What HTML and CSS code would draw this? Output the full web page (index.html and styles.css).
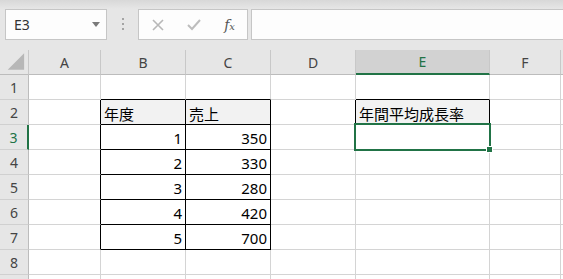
FILE: index.html
```html
<!DOCTYPE html>
<html lang="ja">
<head>
    <meta charset="UTF-8">
    <meta name="viewport" content="width=device-width, initial-scale=1.0">
    <title>年間平均成長率</title>
    <link rel="stylesheet" href="styles.css">
</head>
<body>

<div class="toolbar">
    <div class="name-box">
        <span>E3</span>
        <svg class="arrow" width="8" height="5" viewBox="0 0 8 5"><polygon points="0,0 8,0 4,5" fill="#7a7a7a"/></svg>
    </div>
    <div class="grip"><i></i><i></i><i></i></div>
    <div class="fx-box">
        <svg width="12" height="12" viewBox="0 0 12 12"><path d="M1 1 L11 11 M11 1 L1 11" stroke="#b8b8b8" stroke-width="1.6" fill="none"/></svg>
        <svg width="14" height="12" viewBox="0 0 14 12"><path d="M1 6 L5 10 L13 1" stroke="#bdbdbd" stroke-width="2" fill="none"/></svg>
        <span class="fx">f<sub>x</sub></span>
    </div>
    <div class="formula"></div>
</div>

<div class="sheet">
    <div class="corner"><svg width="29" height="25" viewBox="0 0 29 25"><polygon points="25,3 25,20 8,20" fill="#b7b7b7"/></svg></div>
    <div class="col-head">A</div>
    <div class="col-head">B</div>
    <div class="col-head">C</div>
    <div class="col-head">D</div>
    <div class="col-head active">E</div>
    <div class="col-head">F</div>
    <div class="col-head"></div>

    <div class="row-head">1</div>
    <div class="cell"></div>
    <div class="cell bb"></div>
    <div class="cell bb"></div>
    <div class="cell"></div>
    <div class="cell bb"></div>
    <div class="cell"></div>
    <div class="cell"></div>

    <div class="row-head">2</div>
    <div class="cell br"></div>
    <div class="cell box fill">年度</div>
    <div class="cell box fill">売上</div>
    <div class="cell br"></div>
    <div class="cell box fill">年間平均成長率</div>
    <div class="cell"></div>
    <div class="cell"></div>

    <div class="row-head active">3</div>
    <div class="cell br"></div>
    <div class="cell box num">1</div>
    <div class="cell box num">350</div>
    <div class="cell"></div>
    <div class="cell selected"><div class="selection"><div class="handle"></div></div></div>
    <div class="cell"></div>
    <div class="cell"></div>

    <div class="row-head">4</div>
    <div class="cell br"></div>
    <div class="cell box num">2</div>
    <div class="cell box num">330</div>
    <div class="cell"></div>
    <div class="cell"></div>
    <div class="cell"></div>
    <div class="cell"></div>

    <div class="row-head">5</div>
    <div class="cell br"></div>
    <div class="cell box num">3</div>
    <div class="cell box num">280</div>
    <div class="cell"></div>
    <div class="cell"></div>
    <div class="cell"></div>
    <div class="cell"></div>

    <div class="row-head">6</div>
    <div class="cell br"></div>
    <div class="cell box num">4</div>
    <div class="cell box num">420</div>
    <div class="cell"></div>
    <div class="cell"></div>
    <div class="cell"></div>
    <div class="cell"></div>

    <div class="row-head">7</div>
    <div class="cell br"></div>
    <div class="cell box num">5</div>
    <div class="cell box num">700</div>
    <div class="cell"></div>
    <div class="cell"></div>
    <div class="cell"></div>
    <div class="cell"></div>

    <div class="row-head">8</div>
    <div class="cell"></div>
    <div class="cell"></div>
    <div class="cell"></div>
    <div class="cell"></div>
    <div class="cell"></div>
    <div class="cell"></div>
    <div class="cell"></div>

    <div class="row-head"></div>
    <div class="cell"></div>
    <div class="cell"></div>
    <div class="cell"></div>
    <div class="cell"></div>
    <div class="cell"></div>
    <div class="cell"></div>
    <div class="cell"></div>
</div>

</body>
</html>
```

FILE: styles.css
```css
body {
    margin: 0;
    padding: 0;
    width: 563px;
    height: 279px;
    overflow: hidden;
    background: #fff;
    font-family: "Noto Sans", "Noto Sans CJK JP", sans-serif;
}

.toolbar {
    display: flex;
    align-items: flex-start;
    height: 50px;
    box-sizing: border-box;
    padding-top: 9px;
    background: linear-gradient(#d8d8d8, #e6e6e6 9px);
}

.name-box {
    display: flex;
    align-items: center;
    justify-content: space-between;
    width: 102px;
    height: 31px;
    margin-left: 5px;
    padding: 0 6px 0 8px;
    box-sizing: border-box;
    background: #fdfdfd;
    border: 1px solid #c6c6c6;
    font-size: 14px;
    color: #333;
}

.grip {
    display: flex;
    flex-direction: column;
    gap: 3px;
    width: 2px;
    margin: 9px 14px 0 15px;
}

.grip i {
    display: block;
    width: 2px;
    height: 2px;
    background: #a4a4a4;
}

.fx-box {
    display: flex;
    align-items: center;
    justify-content: space-between;
    width: 110px;
    height: 31px;
    padding: 0 12px 0 13px;
    box-sizing: border-box;
    background: #fdfdfd;
    border: 1px solid #c6c6c6;
}

.fx {
    font-family: "DejaVu Serif", "Liberation Serif", serif;
    font-style: italic;
    font-size: 14px;
    color: #555;
}

.fx sub {
    font-size: 10px;
    vertical-align: 0;
}

.formula {
    flex: 1;
    height: 31px;
    margin-left: 3px;
    box-sizing: border-box;
    background: #fdfdfd;
    border: 1px solid #c6c6c6;
    border-right: none;
}

.sheet {
    display: grid;
    grid-template-columns: 29px 72px 85px 85px 85px 134px 71px 1fr;
    grid-auto-rows: 25px;
}

.corner,
.col-head,
.row-head {
    display: flex;
    align-items: center;
    justify-content: center;
    box-sizing: border-box;
    background: #e6e6e6;
    color: #444;
    font-size: 14px;
    border-right: 1px solid #c8c8c8;
    border-bottom: 1px solid #bcbcbc;
}

.row-head {
    border-bottom-color: #d0d0d0;
    border-right-color: #bcbcbc;
}

.col-head.active {
    background: #d2d2d2;
    color: #217346;
    border-bottom: 2px solid #217346;
}

.row-head.active {
    color: #217346;
    border-right: 2px solid #217346;
}

.cell {
    display: flex;
    align-items: center;
    box-sizing: border-box;
    padding: 2px 3px 0;
    font-size: 15px;
    color: #000;
    border-right: 1px solid #d4d4d4;
    border-bottom: 1px solid #d4d4d4;
    white-space: nowrap;
}

.cell.br {
    border-right-color: #000;
}

.cell.bb {
    border-bottom-color: #000;
}

.cell.box {
    border-right-color: #000;
    border-bottom-color: #000;
}

.cell.fill {
    background: #f2f2f2;
}

.cell.num {
    justify-content: flex-end;
}

.cell.selected {
    position: relative;
}

.selection {
    position: absolute;
    left: -2px;
    top: -2px;
    width: 137px;
    height: 28px;
    box-sizing: border-box;
    border: 2px solid #217346;
}

.handle {
    position: absolute;
    right: -3px;
    bottom: -3px;
    width: 5px;
    height: 5px;
    background: #217346;
    box-shadow: 0 0 0 1px #fff;
}
```
